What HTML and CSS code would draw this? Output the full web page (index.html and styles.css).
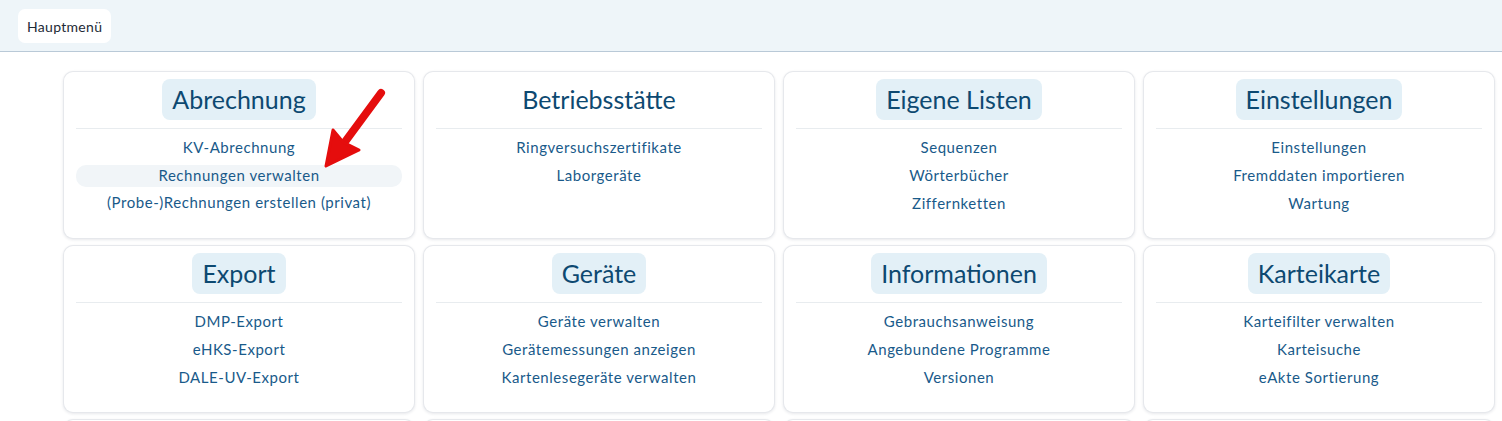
FILE: index.html
```html
<!DOCTYPE html>
<html lang="de">
<head>
<meta charset="utf-8">
<title>Hauptmenü</title>
<link rel="stylesheet" href="styles.css">
</head>
<body>
<header class="topbar">
  <button class="home-btn">Hauptmenü</button>
</header>
<main class="grid">
  <section class="card">
    <div class="card-head"><h2 class="title">Abrechnung</h2></div>
    <ul class="items">
      <li>KV-Abrechnung</li>
      <li class="hover">Rechnungen verwalten</li>
      <li>(Probe-)Rechnungen erstellen (privat)</li>
    </ul>
    <svg class="arrow" width="80" height="90" viewBox="0 0 80 90">
      <path d="M58 9 L16 66" stroke="#e50d0d" stroke-width="8" stroke-linecap="round" fill="none"/>
      <path d="M3 82 L10 46 L20 58 L36 66 Z" fill="#e50d0d" stroke="#e50d0d" stroke-width="3" stroke-linejoin="round"/>
    </svg>
  </section>
  <section class="card">
    <div class="card-head"><h2 class="title plain">Betriebsstätte</h2></div>
    <ul class="items">
      <li>Ringversuchszertifikate</li>
      <li>Laborgeräte</li>
    </ul>
  </section>
  <section class="card">
    <div class="card-head"><h2 class="title">Eigene Listen</h2></div>
    <ul class="items">
      <li>Sequenzen</li>
      <li>Wörterbücher</li>
      <li>Ziffernketten</li>
    </ul>
  </section>
  <section class="card">
    <div class="card-head"><h2 class="title">Einstellungen</h2></div>
    <ul class="items">
      <li>Einstellungen</li>
      <li>Fremddaten importieren</li>
      <li>Wartung</li>
    </ul>
  </section>
  <section class="card">
    <div class="card-head"><h2 class="title">Export</h2></div>
    <ul class="items">
      <li>DMP-Export</li>
      <li>eHKS-Export</li>
      <li>DALE-UV-Export</li>
    </ul>
  </section>
  <section class="card">
    <div class="card-head"><h2 class="title">Geräte</h2></div>
    <ul class="items">
      <li>Geräte verwalten</li>
      <li>Gerätemessungen anzeigen</li>
      <li>Kartenlesegeräte verwalten</li>
    </ul>
  </section>
  <section class="card">
    <div class="card-head"><h2 class="title">Informationen</h2></div>
    <ul class="items">
      <li>Gebrauchsanweisung</li>
      <li>Angebundene Programme</li>
      <li>Versionen</li>
    </ul>
  </section>
  <section class="card">
    <div class="card-head"><h2 class="title">Karteikarte</h2></div>
    <ul class="items">
      <li>Karteifilter verwalten</li>
      <li>Karteisuche</li>
      <li>eAkte Sortierung</li>
    </ul>
  </section>
  <section class="card"></section>
  <section class="card"></section>
  <section class="card"></section>
  <section class="card"></section>
</main>
</body>
</html>
```
FILE: styles.css
```css
* { box-sizing: border-box; }
html, body {
  margin: 0;
  padding: 0;
  background: #ffffff;
  font-family: Lato, "Open Sans", sans-serif;
  overflow: hidden;
}
.topbar {
  height: 52px;
  background: #eef5f9;
  border-bottom: 1px solid #b9c9d7;
  padding: 9px 18px;
}
.home-btn {
  height: 34px;
  padding: 0 9px;
  border: none;
  border-radius: 7px;
  background: #ffffff;
  font-family: Lato, sans-serif;
  font-size: 14px;
  letter-spacing: 0.3px;
  color: #1d2a36;
}
.grid {
  display: grid;
  grid-template-columns: repeat(4, 350px);
  grid-auto-rows: 166px;
  gap: 8px 10px;
  padding: 20px 0 0 64px;
}
.card {
  position: relative;
  background: #ffffff;
  border-radius: 9px;
  box-shadow: 0 0 0 1px #e6e8ec, 0 1px 3px 1px rgba(20, 30, 60, 0.10);
  padding: 7px 12px 0;
}
.card-head {
  display: flex;
  justify-content: center;
  padding-bottom: 8px;
  border-bottom: 1px solid #e8ecef;
}
.title {
  margin: 0;
  height: 41px;
  line-height: 40px;
  padding: 0 10px;
  border-radius: 8px;
  background: #e3f0f7;
  font-size: 25px;
  font-weight: 400;
  color: #0d4971;
}
.title.plain { background: transparent; }
.items {
  list-style: none;
  margin: 6px 0 0;
  padding: 0;
}
.items li {
  height: 28px;
  line-height: 22px;
  padding-top: 1px;
  text-align: center;
  font-size: 15px;
  letter-spacing: 0.55px;
  color: #195a8a;
}
.items li.hover {
  height: 22px;
  line-height: 20px;
  margin: 2px 0 3px;
  padding-top: 0;
  border-radius: 10px;
  background: #f1f5f8;
}
.arrow {
  position: absolute;
  left: 259px;
  top: 12px;
}
```
